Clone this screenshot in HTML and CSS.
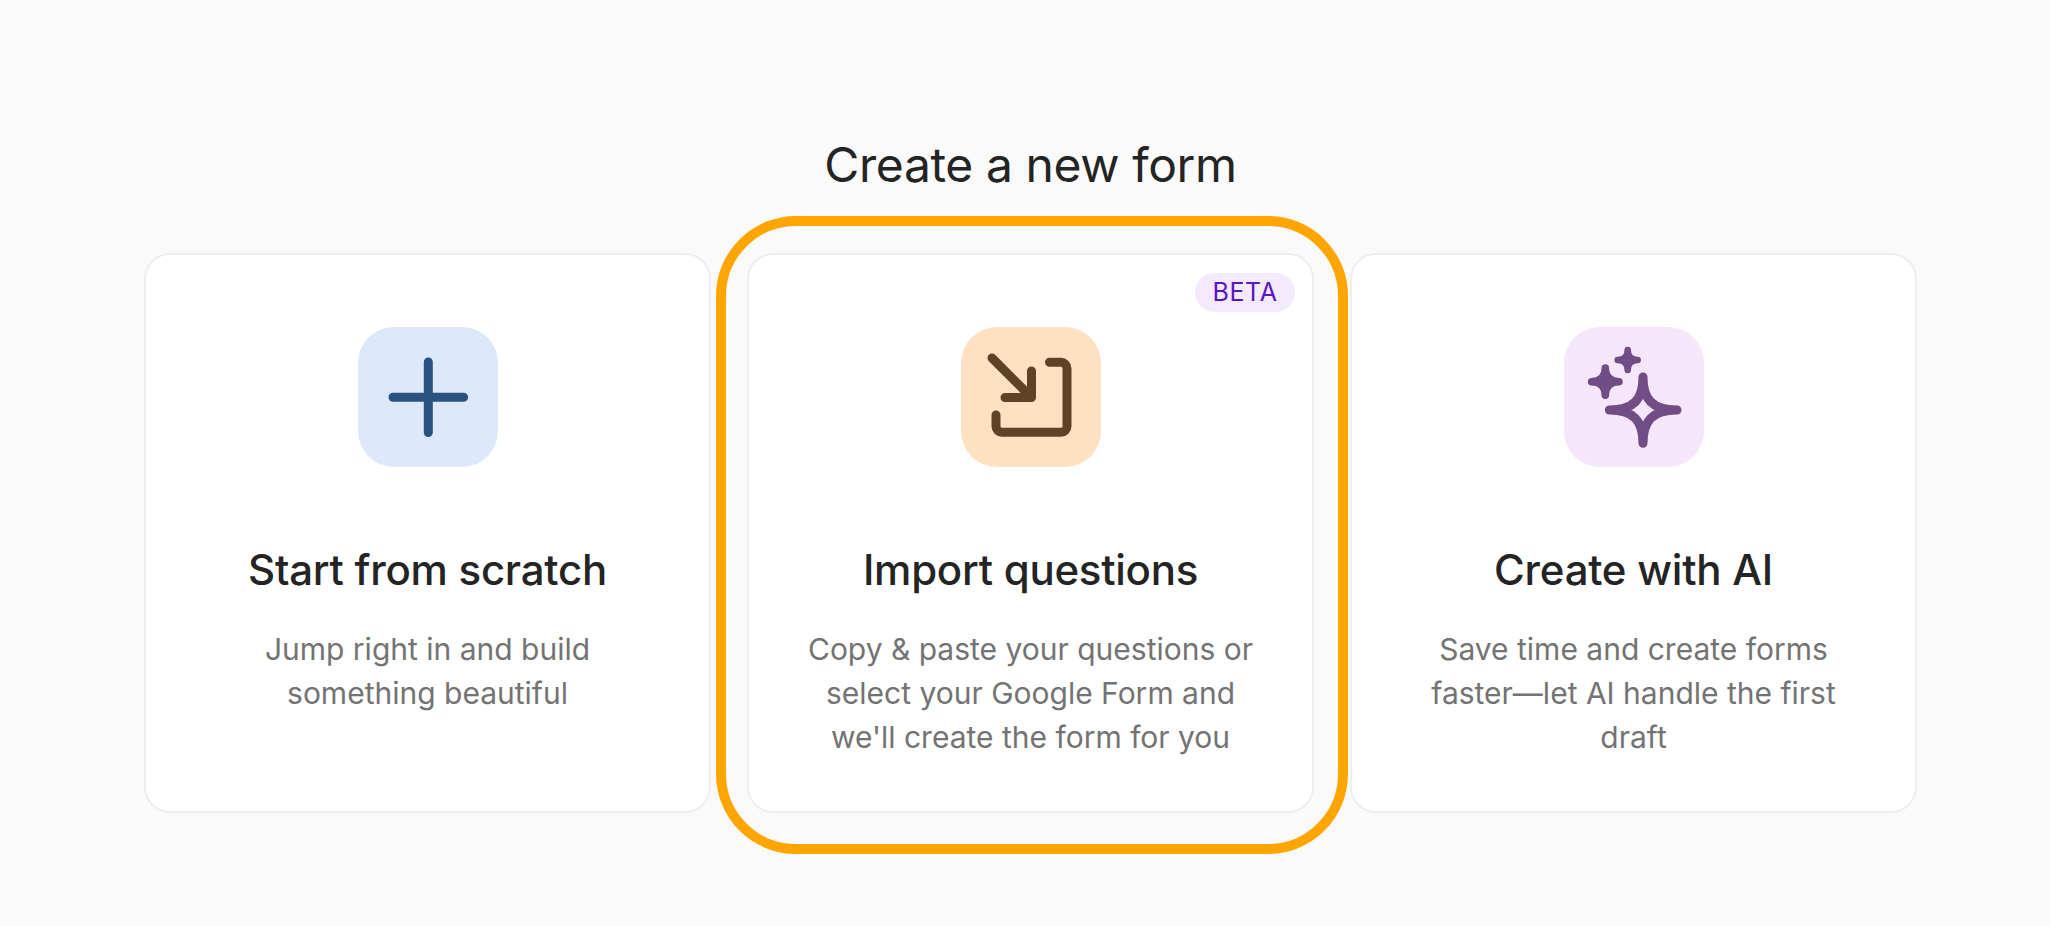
FILE: index.html
```html
<!DOCTYPE html>
<html lang="en">
<head>
<meta charset="utf-8">
<title>Create a new form</title>
<link rel="stylesheet" href="styles.css">
</head>
<body>
<main class="page">
  <h1 class="heading">Create a new form</h1>
  <div class="cards">
    <section class="card">
      <div class="icon icon-blue">
        <svg class="glyph" viewBox="0 0 140 140"><path class="ln" d="M70.3 35V105.600M35 70.300H105.600"/></svg>
      </div>
      <h2 class="title">Start from scratch</h2>
      <p class="desc">Jump right in and build something beautiful</p>
    </section>
    <section class="card card-highlighted">
      <span class="highlight"></span>
      <span class="badge">BETA</span>
      <div class="icon icon-orange">
        <svg class="glyph" viewBox="0 0 140 140"><path class="ln" d="M31 31L70.500 70.500M70.500 44V70.500H44M88.500 35.300H100a6 6 0 0 1 6 6V99.300a6 6 0 0 1-6 6H41a6 6 0 0 1-6-6V88"/></svg>
      </div>
      <h2 class="title">Import questions</h2>
      <p class="desc">Copy &amp; paste your questions or select your Google Form and we'll create the form for you</p>
    </section>
    <section class="card">
      <div class="icon icon-purple">
        <svg class="glyph" viewBox="0 0 140 140">
          <path class="ln" d="M79 50C79 72 88 83 113 83C88 83 79 94 79 116.300C79 94 70 83 45.300 83C70 83 79 72 79 50Z"/>
          <path class="ln fl sm-a" d="M41.300 41C41.300 50 46 54.700 55 54.700C46 54.700 41.300 59.500 41.300 68.300C41.300 59.500 36.500 54.700 27.600 54.700C36.500 54.700 41.300 50 41.300 41Z"/>
          <path class="ln fl sm-b" d="M63.700 23C63.700 29 67.500 33 73.700 33C67.500 33 63.700 37 63.700 43C63.700 37 60 33 53.700 33C60 33 63.700 29 63.700 23Z"/>
        </svg>
      </div>
      <h2 class="title">Create with AI</h2>
      <p class="desc">Save time and create forms faster—let AI handle the first draft</p>
    </section>
  </div>
</main>
</body>
</html>
```

FILE: styles.css
```css
* { box-sizing: border-box; }
html, body { margin: 0; height: 100%; }
body {
  background: #fafafa;
  font-family: Inter, "Liberation Sans", sans-serif;
  color: #242424;
  overflow: hidden;
}
.page { padding: 135px 133px 0 144px; }
.heading {
  margin: 0 0 58px;
  font-size: 48px;
  line-height: 60px;
  font-weight: 400;
  letter-spacing: -0.4px;
  text-align: center;
}
.cards {
  display: grid;
  grid-template-columns: repeat(3, 1fr);
  gap: 36px;
}
.card {
  position: relative;
  display: flex;
  flex-direction: column;
  align-items: center;
  padding: 72px 54px 52px;
  background: #fff;
  border: 2px solid #eeeeee;
  border-radius: 26px;
  text-align: center;
}
.highlight {
  position: absolute;
  inset: -39px -36px -43px -33px;
  border: 10px solid #ffa500;
  border-radius: 80px;
  pointer-events: none;
}
.badge {
  position: absolute;
  top: 18px;
  right: 17px;
  width: 100px;
  height: 39px;
  border-radius: 20px;
  background: #f3eafd;
  color: #5a14c0;
  font-size: 25px;
  line-height: 39px;
  letter-spacing: 0.6px;
  text-align: center;
}
.icon {
  width: 140px;
  height: 140px;
  border-radius: 36px;
}
.icon-blue { background: #dde8fa; color: #2a5280; }
.icon-orange { background: #fee0c2; color: #5e4329; }
.icon-purple { background: #f5e6fa; color: #714c85; }
.glyph { display: block; width: 140px; height: 140px; }
.ln {
  fill: none;
  stroke: currentColor;
  stroke-width: 9;
  stroke-linecap: round;
  stroke-linejoin: round;
}
.fl { fill: currentColor; }
.sm-a { stroke-width: 7.500; }
.sm-b { stroke-width: 6.500; }
.title {
  margin: 77px 0 0;
  font-size: 42px;
  line-height: 52px;
  font-weight: 500;
  letter-spacing: -0.25px;
}
.desc {
  margin: 31px 0 0;
  font-size: 30px;
  line-height: 44px;
  color: #737373;
}
```
